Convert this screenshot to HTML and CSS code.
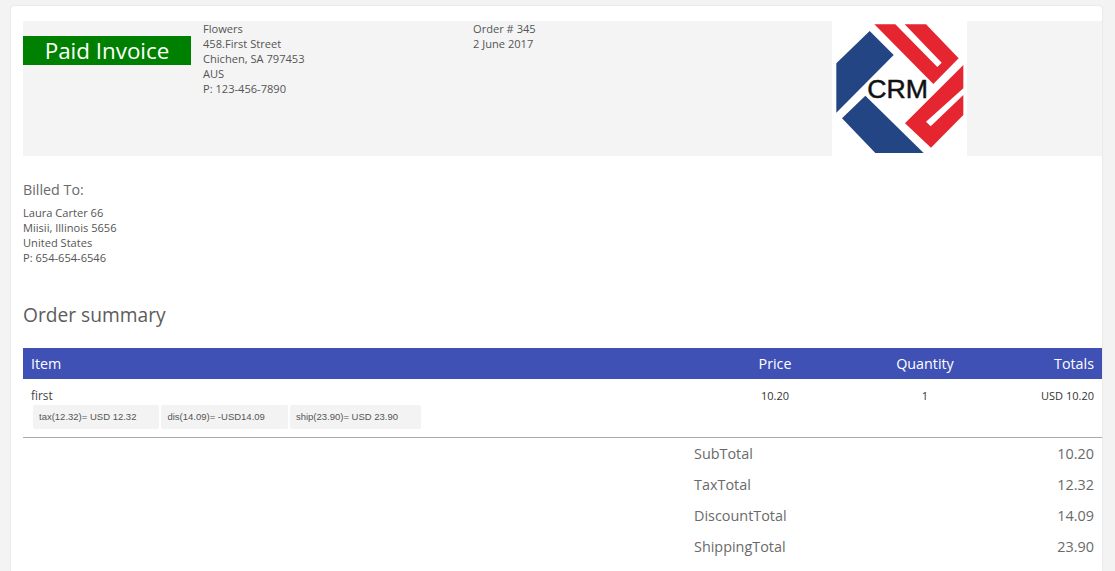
FILE: index.html
```html
<!DOCTYPE html>
<html lang="en">
<head>
<meta charset="utf-8">
<title>Paid Invoice</title>
<link rel="stylesheet" href="styles.css">
</head>
<body>
<main class="card">
  <header class="band">
    <div class="status-col"><div class="status">Paid Invoice</div></div>
    <address class="from">Flowers<br>458.First Street<br>Chichen, SA 797453<br>AUS<br>P: 123-456-7890</address>
    <div class="order">Order # 345<br>2 June 2017</div>
    <div class="logo">
      <svg viewBox="0 0 405 405" width="135" height="135" aria-label="CRM logo">
        <polygon class="blue" points="113,30 185,102 13,275 13,127"/>
        <polygon class="blue" points="100,224 275,396 130,396 30,292"/>
        <polygon class="red" points="127,10 190,10 316,138 329,125 218,10 282,10 380,112 304,189"/>
        <polygon class="red" points="394,132 394,202 282,302 296,316 394,222 394,282 297,380 219,307"/>
        <text x="197" y="232" class="crm">CRM</text>
      </svg>
    </div>
  </header>
  <section class="billed">
    <h2 class="billed-title">Billed To:</h2>
    <p class="billed-text">Laura Carter 66<br>Miisii, Illinois 5656<br>United States<br>P: 654-654-6546</p>
  </section>
  <h1 class="summary-title">Order summary</h1>
  <div class="thead">
    <div class="c-item">Item</div><div class="c-price">Price</div><div class="c-qty">Quantity</div><div class="c-total">Totals</div>
  </div>
  <div class="trow">
    <div class="c-item">
      <div class="name">first</div>
      <div class="chips"><span class="chip">tax(12.32)= USD 12.32</span><span class="chip">dis(14.09)= -USD14.09</span><span class="chip">ship(23.90)= USD 23.90</span></div>
    </div>
    <div class="c-price num">10.20</div><div class="c-qty num">1</div><div class="c-total num">USD 10.20</div>
  </div>
  <dl class="totals">
    <div class="line"><dt>SubTotal</dt><dd>10.20</dd></div>
    <div class="line"><dt>TaxTotal</dt><dd>12.32</dd></div>
    <div class="line"><dt>DiscountTotal</dt><dd>14.09</dd></div>
    <div class="line"><dt>ShippingTotal</dt><dd>23.90</dd></div>
  </dl>
</main>
</body>
</html>
```
FILE: styles.css
```css
* { box-sizing: border-box; }
html, body { margin: 0; height: 571px; overflow: hidden; }
body { background: #f3f3f3; font-family: "Open Sans", "Noto Sans", sans-serif; color: #555; padding: 6px 13px 0 11px; }
.card { background: #fff; padding: 15px 0 0 12px; height: 565px; overflow: hidden; border-radius: 3px 3px 0 0; box-shadow: 0 0 2px rgba(0,0,0,.12); }
.band { display: flex; height: 135px; background: #f4f4f4; }
.status-col { width: 180px; padding-top: 15px; }
.status { width: 168px; height: 29px; background: #008000; color: #fff; font-size: 22.4px; line-height: 29px; text-align: center; }
.from, .order { font-style: normal; font-size: 11.1px; line-height: 15px; color: #555; }
.from { width: 270px; }
.order { width: 359px; }
.logo { width: 135px; height: 135px; background: #fff; }
.logo svg { display: block; }
.blue { fill: #234584; }
.red { fill: #e52631; }
.crm { font-family: "Liberation Sans", sans-serif; font-size: 80px; fill: #111; stroke: #111; stroke-width: 1.5px; text-anchor: middle; }
.billed { padding-top: 24px; }
.billed-title { margin: 0; font-weight: 400; font-size: 14.3px; line-height: 19px; color: #6a6a6a; }
.billed-text { margin: 6px 0 0; font-size: 11.1px; line-height: 15px; color: #555; }
.summary-title { margin: 37px 0 0; font-weight: 400; font-size: 19.2px; line-height: 26px; color: #5c5c5c; }
.thead, .trow { display: grid; grid-template-columns: 677px 150px 150px 102px; }
.thead { margin-top: 20px; height: 31px; background: #3f51b5; color: #fff; font-size: 14.3px; line-height: 31px; font-weight: 500; }
.thead > *, .trow > * { padding: 0 8px; }
.c-price, .c-qty { text-align: center; }
.c-total { text-align: right; }
.trow { height: 59px; border-bottom: 1px solid #aaa; padding-top: 9px; }
.name { font-size: 11.8px; line-height: 15px; font-weight: 500; color: #444; }
.num { font-size: 11px; line-height: 15px; font-weight: 500; color: #333; white-space: nowrap; }
.chips { display: flex; gap: 2px; margin: 2px 0 0 2px; }
.chip { font-family: "Liberation Sans", sans-serif; font-size: 9.5px; height: 24px; line-height: 24px; padding: 0 23px 0 6px; background: #f3f3f3; border-radius: 2px; color: #555; white-space: nowrap; }
.totals { margin: 0; padding-left: 671px; }
.line { display: flex; justify-content: space-between; height: 31px; padding-right: 8px; font-size: 14.4px; line-height: 31px; color: #6a6a6a; }
.line dt, .line dd { margin: 0; }
```
